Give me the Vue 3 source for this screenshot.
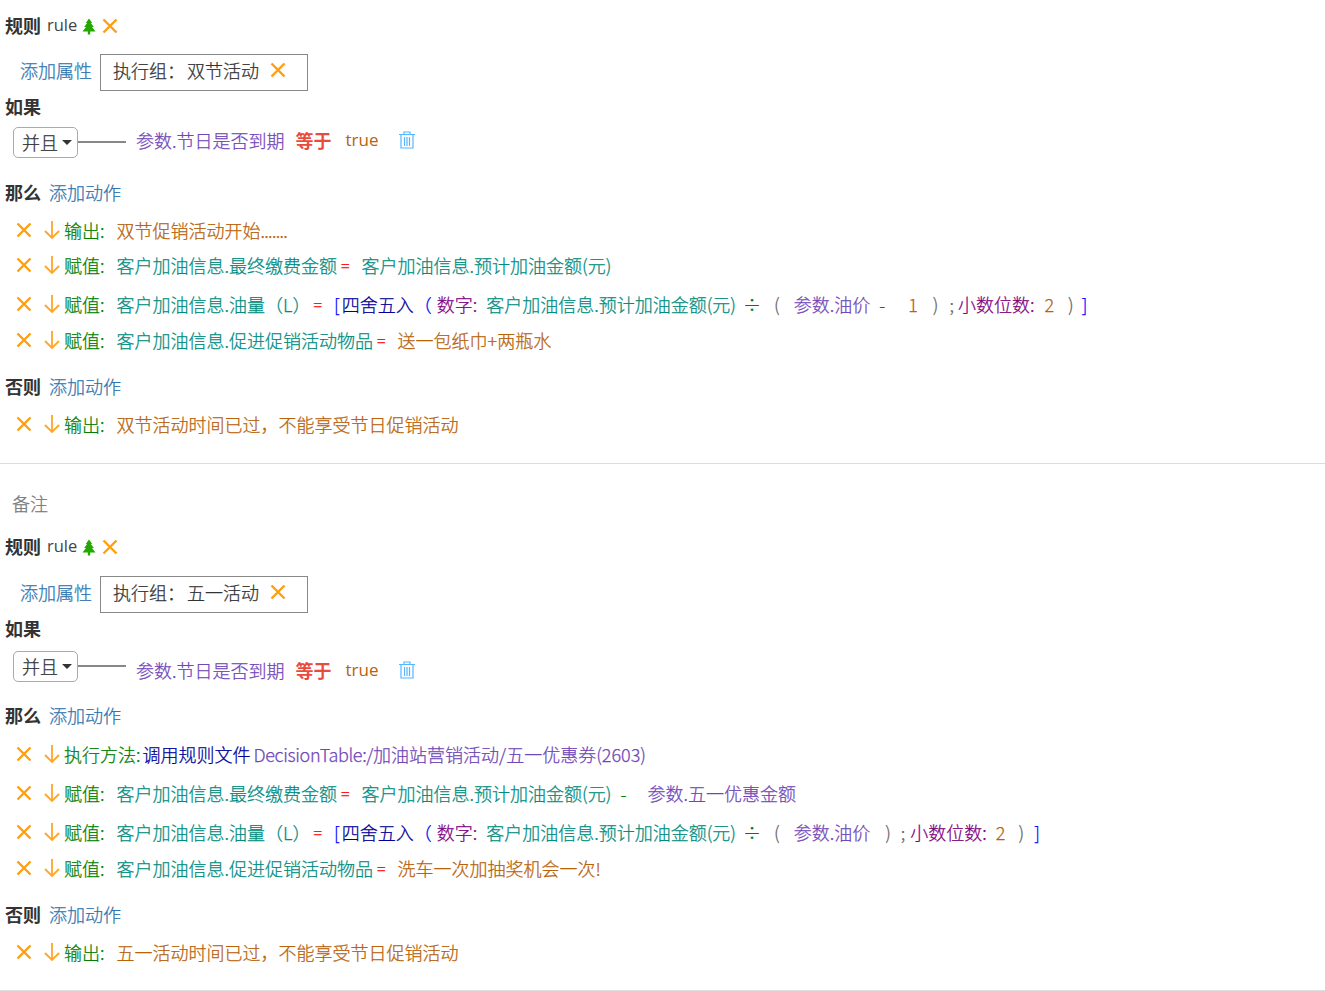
<script setup>
const T = 'teal', O = 'orange', P = 'purple', R = 'red', B = 'blue', N = 'navy', M = 'magenta', G = 'green', K = 'grey'
const s = (t, c, g = 0) => ({ t, c, g })
const name = (t) => s(t, T, 11)
const first = {
  remark: false,
  group: '双节活动',
  thenRows: [
    { h: 't1', label: '输出', segs: [s('双节促销活动开始', O, 11), s('.......', 'orange dots', 0)] },
    { h: 't2', label: '赋值', segs: [name('客户加油信息.最终缴费金额'), s('=', R, 4), s('客户加油信息.预计加油金额(元)', T, 12)] },
    { h: 't3', label: '赋值', segs: [name('客户加油信息.油量（L）'), s('=', R, 3), s('[', B, 12), s('四舍五入', N, 2), s('（', B, 0), s('数字:', M, 5), s('客户加油信息.预计加油金额(元)', T, 9), s('÷', G, 7), s('(', K, 13), s('参数.油价', P, 14), s('-', G, 9), s('1', O, 23), s(')', K, 15), s(';', K, 11), s('小数位数:', M, 4), s('2', O, 10), s(')', K, 14), s(']', B, 8)] },
    { h: 't4', label: '赋值', segs: [name('客户加油信息.促进促销活动物品'), s('=', R, 4), s('送一包纸巾+两瓶水', O, 12)] }
  ],
  elseRow: { label: '输出', segs: [s('双节活动时间已过，不能享受节日促销活动', O, 11)] }
}
const second = {
  remark: true,
  group: '五一活动',
  thenRows: [
    { h: 't5', label: '执行方法', segs: [s('调用规则文件', N, 1), s('DecisionTable:/', 'purple latin', 3), s('加油站营销活动/五一优惠券(2603)', P, 0)] },
    { h: 't6', label: '赋值', segs: [name('客户加油信息.最终缴费金额'), s('=', R, 4), s('客户加油信息.预计加油金额(元)', T, 12), s('-', G, 9), s('参数.五一优惠金额', P, 21)] },
    { h: 't7', label: '赋值', segs: [name('客户加油信息.油量（L）'), s('=', R, 3), s('[', B, 12), s('四舍五入', N, 2), s('（', B, 0), s('数字:', M, 5), s('客户加油信息.预计加油金额(元)', T, 9), s('÷', G, 7), s('(', K, 13), s('参数.油价', P, 14), s(')', K, 15), s(';', K, 10), s('小数位数:', M, 5), s('2', O, 9), s(')', K, 13), s(']', B, 10)] },
    { h: 't8', label: '赋值', segs: [name('客户加油信息.促进促销活动物品'), s('=', R, 4), s('洗车一次加抽奖机会一次!', O, 12)] }
  ],
  elseRow: { label: '输出', segs: [s('五一活动时间已过，不能享受节日促销活动', O, 11)] }
}
const rules = [first, second]
const cross = 'M2.5 2.5 L15.5 15.5 M15.5 2.5 L2.5 15.5'
</script>

<template>
  <div class="page">
    <section v-for="rule in rules" :key="rule.group" class="rule" :class="{ second: rule.remark }">
      <div v-if="rule.remark" class="remark">备注</div>
      <div class="title">
        <b>规则</b>
        <span class="rule-name">rule</span>
        <svg class="tree" viewBox="0 0 14 17" width="14" height="17"><path d="M7 0.5 L10.2 5 H8.9 L11.8 9 H10 L13.5 13.5 H8.2 V16.5 H5.8 V13.5 H0.5 L4 9 H2.2 L5.1 5 H3.8 Z" fill="#22a800"/></svg>
        <svg class="x x-title" viewBox="0 0 18 18" width="18" height="18"><path :d="cross"/></svg>
      </div>
      <div class="attrs">
        <a class="link">添加属性</a>
        <div class="attr-box">
          <span class="attr-text">执行组：</span>
          <span class="attr-text attr-value">{{ rule.group }}</span>
          <svg class="x" viewBox="0 0 18 18" width="18" height="18"><path :d="cross"/></svg>
        </div>
      </div>
      <div class="head if"><b>如果</b></div>
      <div class="cond">
        <div class="select">并且<i class="caret"></i></div>
        <div class="wire"></div>
        <span class="purple cond-left cond-item">参数.节日是否到期</span>
        <span class="op cond-item">等于</span>
        <span class="orange cond-right cond-item">true</span>
        <svg class="trash cond-item" viewBox="0 0 16 18" width="16" height="18" fill="none" stroke="#55b7ff" stroke-width="1.2"><path d="M0 3.5 H16 M5 3.5 V1 H11 V3.5 M2 3.5 V17 H14 V3.5 M5.5 6 V15 M8 6 V15 M10.5 6 V15"/></svg>
      </div>
      <div class="head then"><b>那么</b><a class="link">添加动作</a></div>
      <div v-for="(row, i) in rule.thenRows" :key="i" class="action" :class="row.h">
        <svg class="x" viewBox="0 0 18 18" width="18" height="18"><path :d="cross"/></svg>
        <svg class="arrow" viewBox="0 0 16 20" width="16" height="20"><path d="M8 1 V18 M1 11 L8 18 L15 11"/></svg>
        <span class="green label">{{ row.label }}:</span>
        <span v-for="(seg, j) in row.segs" :key="j" :class="seg.c" :style="{ marginLeft: seg.g + 'px' }">{{ seg.t }}</span>
      </div>
      <div class="head else"><b>否则</b><a class="link">添加动作</a></div>
      <div class="action t9">
        <svg class="x" viewBox="0 0 18 18" width="18" height="18"><path :d="cross"/></svg>
        <svg class="arrow" viewBox="0 0 16 20" width="16" height="20"><path d="M8 1 V18 M1 11 L8 18 L15 11"/></svg>
        <span class="green label">{{ rule.elseRow.label }}:</span>
        <span v-for="(seg, j) in rule.elseRow.segs" :key="j" :class="seg.c" :style="{ marginLeft: seg.g + 'px' }">{{ seg.t }}</span>
      </div>
    </section>
  </div>
</template>

<style scoped>
.page {
  width: 1325px;
  font-family: "Noto Sans CJK SC", "Noto Sans", sans-serif;
  font-size: 18px;
  font-weight: 300;
  -webkit-text-stroke: 0.25px;
  color: #333;
  line-height: 26px;
}
.rule { border-bottom: 1px solid #ddd; padding: 13px 0 24px 5px; height: 426px; box-sizing: content-box; }
.rule.second { padding-top: 24px; height: 502px; padding-bottom: 0; }
b { font-weight: 700; color: #333; -webkit-text-stroke: 0; }
.remark { color: #777; padding-left: 7px; height: 30px; line-height: 30px; margin-bottom: 16px; }
.title { display: flex; align-items: center; height: 26px; }
.title b { margin-bottom: 2px; }
.rule-name { margin-left: 6px; margin-bottom: 2px; font-family: "Open Sans", sans-serif; font-size: 16.5px; font-weight: 400; -webkit-text-stroke: 0; color: #444; }
.tree { margin-left: 5px; }
.x { fill: none; stroke: #ff9e0f; stroke-width: 2.4; flex: none; }
.x-title { margin-left: 5px; }
.attrs { display: flex; align-items: center; margin-top: 15px; padding-left: 15px; }
.second .attrs { margin-top: 16px; }
.link { color: #2f75b0; }
.attrs > .link { margin-bottom: 6px; }
.attr-box { display: flex; align-items: center; margin-left: 8px; width: 208px; height: 37px; border: 1px solid #888; box-sizing: border-box; padding-left: 12px; }
.attr-text { margin-bottom: 6px; }
.attr-value { margin-left: 2px; }
.attr-box .x { margin-left: 10px; margin-bottom: 5px; }
.head { display: flex; align-items: center; height: 26px; }
.head .link { margin-left: 8px; }
.if { margin-top: 2px; }
.cond { display: flex; align-items: center; height: 32px; margin-top: 7px; padding-left: 8px; }
.second .cond { margin-top: 9px; }
.cond-item { margin-bottom: 4px; }
.second .cond-item { margin-top: 8px; margin-bottom: 0; }
.select { display: flex; align-items: center; width: 65px; height: 31px; border: 1px solid #aaa; border-radius: 5px; box-sizing: border-box; padding-left: 8px; }
.caret { width: 0; height: 0; margin-left: 4px; border-top: 5px solid #333; border-left: 5px solid transparent; border-right: 5px solid transparent; }
.wire { width: 48px; height: 2px; background: #888; }
.cond-left { margin-left: 10px; }
.op { margin-left: 11px; color: #e74c3c; font-weight: 700; -webkit-text-stroke: 0; }
.cond-right { margin-left: 14px; font-family: "Open Sans", sans-serif; font-size: 17px; font-weight: 400; -webkit-text-stroke: 0; }
.trash { margin-left: 21px; }
.then { margin-top: 21px; }
.second .then { margin-top: 20px; }
.else { margin-top: 20px; }
.action { display: flex; align-items: center; height: 26px; padding-left: 10px; white-space: pre; }
.arrow { fill: none; stroke: #ffa52a; stroke-width: 1.8; margin-left: 11px; flex: none; }
.label { margin-left: 4px; padding-right: 1px; }
.t1 { margin-top: 12px; }
.t2 { margin-top: 9px; }
.t3 { margin-top: 13px; }
.t4 { margin-top: 10px; }
.t5 { margin-top: 13px; }
.t6, .t7 { margin-top: 13px; }
.t8 { margin-top: 10px; }
.t9 { margin-top: 12px; }
.teal { color: #008c80; }
.orange { color: #b8620a; }
.purple { color: #7046b8; }
.red { color: #f00; font-size: 16px; }
.blue { color: #0000ff; }
.navy { color: #000099; }
.magenta { color: #800080; }
.green { color: #008000; }
.grey { color: #666; }
.dots { letter-spacing: -0.7px; }
.latin { letter-spacing: -0.35px; }
</style>
